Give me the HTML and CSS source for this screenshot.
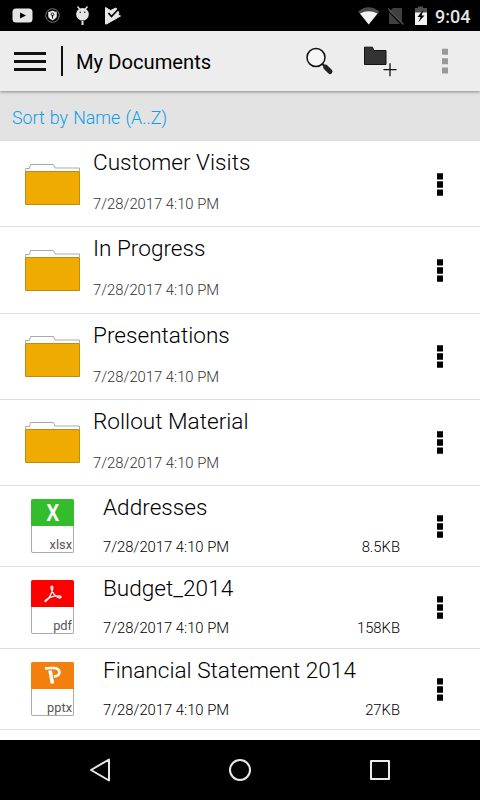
FILE: index.html
```
<!DOCTYPE html>
<html>
	<head>
		<meta charset="UTF-8">
		<title>My Documents</title>
		<link rel="stylesheet" href="styles.css">
	</head>
	<body>
		<!-- icons used more than once -->
		<svg class="defs">
			<symbol id="folder" viewBox="0 0 56 44">
				<path d="M.7 8V5.500H4.500L5.500 1.500H28.500L30 5H54.500V8" fill="#fff" stroke="#aaa"/>
				<path d="M.5 8.500H54.500V41.500H.5z" fill="#f0ab00" stroke="#bd8b16"/>
			</symbol>
			<symbol id="more" viewBox="0 0 6 24">
				<path d="M0 .2h6v6.400H0zM0 8.300h6v6.400H0zM0 16.400h6v6.400H0z" fill="#000"/>
			</symbol>
		</svg>

		<div class="status">
			<svg width="130" height="31" viewBox="0 0 130 31">
				<rect x="12.500" y="8.500" width="20" height="14" rx="3.500" fill="#e5e5e5"/>
				<path d="M20 12.500l6 3-6 3z" fill="#000"/>
				<circle cx="52.500" cy="15.500" r="6.800" fill="none" stroke="#777" stroke-width="1"/>
				<path d="M52.500 10.500c1.500 1 3 1.200 4.300 1.200v4.300c0 2-2.200 3.500-4.300 4.400-2.100-.9-4.300-2.400-4.300-4.400v-4.300c1.300 0 2.800-.2 4.300-1.200z" fill="#e5e5e5"/>
				<path d="M52.500 15v3.500" stroke="#000"/>
				<circle cx="52.500" cy="14.300" r="1.300" fill="none" stroke="#000" stroke-width=".8"/>
				<path d="M77.500 6.500l2.500 3M87.500 6.500l-2.500 3" stroke="#e5e5e5" stroke-width="1.400"/>
				<circle cx="82.500" cy="14.200" r="6.300" fill="#e5e5e5"/>
				<path d="M82.500 21v4" stroke="#e5e5e5" stroke-width="2"/>
				<circle cx="80.200" cy="12.300" r=".7"/><circle cx="84.800" cy="12.300" r=".7"/>
				<path d="M105.500 7.500l5 3 5.500-2.500 3 5-1 2 2.500 1-14 8h-1z" fill="#e5e5e5" stroke="#e5e5e5" stroke-linejoin="round"/>
				<path d="M108.500 13l3 3.500 7-7.500" fill="none" stroke="#000" stroke-width="1.700"/>
			</svg>
			<svg class="right" width="74" height="31" viewBox="0 0 74 31">
				<path d="M0 11.500Q10.500 3 21.500 11.500L10.700 24.500z" fill="#4a4a4a"/>
				<path d="M2 13.500Q10.500 9 19.500 13.500L10.700 24.500z" fill="#f2f2f2"/>
				<path d="M35 8h8q1 0 1 1v14.500L31 11.500zM31 12.500L42 24H32q-1 0-1-1z" fill="#404040"/>
				<path d="M30 8.500L45.500 24.500" stroke="#505050" stroke-width="1.300"/>
				<path d="M57 13V8h3V6.500h5V8h4v5z" fill="#505050"/>
				<path d="M57 12.500h12V25H57z" fill="#f2f2f2"/>
				<path d="M65.500 9.500l-6 7.500h3l-2 5 6-6.500h-3z" fill="#000"/>
			</svg>
			<span class="clock">9:04</span>
		</div>

		<div class="header">
			<div class="menu"><i></i><i></i><i></i></div>
			<div class="line"></div>
			<h1>My Documents</h1>
			<svg class="search" width="30" height="30" viewBox="0 0 30 30">
				<circle cx="10" cy="10.500" r="9" fill="#f5f5f5" stroke="#111" stroke-width="1.500"/>
				<path d="M16.200 16.800l3 3" stroke="#111" stroke-width="2"/>
				<path d="M19.700 20.200l4.300 4.300" stroke="#222" stroke-width="5" stroke-linecap="round"/>
			</svg>
			<svg class="add" width="34" height="32" viewBox="0 0 34 32">
				<path d="M.5 2.200h8l1.500 3.300h12v14H.5z" fill="#333" stroke="#111"/>
				<path d="M19.500 24.700h13M26 18.200v13" stroke="#111" stroke-width="1.300"/>
			</svg>
			<svg class="top-more" width="6" height="26" viewBox="0 0 6 26">
				<path d="M0 .8h6v6H0zM0 10.200h6v6H0zM0 19.600h6v6H0z" fill="#999"/>
			</svg>
		</div>

		<div class="sort">Sort by Name (A..Z)</div>

		<div class="list">
			<div class="row folder">
				<svg class="pic"><use href="#folder"/></svg>
				<div class="info"><h2>Customer Visits</h2><p>7/28/2017 4:10 PM</p></div>
				<svg class="more"><use href="#more"/></svg>
			</div>
			<div class="row folder">
				<svg class="pic"><use href="#folder"/></svg>
				<div class="info"><h2>In Progress</h2><p>7/28/2017 4:10 PM</p></div>
				<svg class="more"><use href="#more"/></svg>
			</div>
			<div class="row folder">
				<svg class="pic"><use href="#folder"/></svg>
				<div class="info"><h2>Presentations</h2><p>7/28/2017 4:10 PM</p></div>
				<svg class="more"><use href="#more"/></svg>
			</div>
			<div class="row folder">
				<svg class="pic"><use href="#folder"/></svg>
				<div class="info"><h2>Rollout Material</h2><p>7/28/2017 4:10 PM</p></div>
				<svg class="more"><use href="#more"/></svg>
			</div>
			<div class="row file">
				<div class="doc">
					<div class="type xlsx"><b>X</b></div>
					<span>xlsx</span>
				</div>
				<div class="info"><h2>Addresses</h2><p>7/28/2017 4:10 PM<span>8.5KB</span></p></div>
				<svg class="more"><use href="#more"/></svg>
			</div>
			<div class="row file">
				<div class="doc">
					<div class="type pdf">
						<svg width="18" height="18" viewBox="0 0 18 18">
							<path d="M1.500 16.500C4 15 8.500 8 8.800 3c0-2.500-2-2.500-1.800 0C7.500 7 12 12.500 15.500 13c2 .2 2-2 0-2C11 10.800 5 12.500 1.800 15c-1 1-.8 1.800-.3 1.500z" fill="none" stroke="#fff" stroke-width="1.300"/>
						</svg>
					</div>
					<span>pdf</span>
				</div>
				<div class="info"><h2>Budget_2014</h2><p>7/28/2017 4:10 PM<span>158KB</span></p></div>
				<svg class="more"><use href="#more"/></svg>
			</div>
			<div class="row file">
				<div class="doc">
					<div class="type pptx">
						<svg width="18" height="18" viewBox="0 0 18 18">
							<path d="M1 2.500Q5 1.800 9 2c8.500-.5 8.500 8.500 1 8.500" fill="none" stroke="#fff" stroke-width="2.600"/>
							<path d="M6 4.500L8.500 17.500" stroke="#fff" stroke-width="3.600"/>
						</svg>
					</div>
					<span>pptx</span>
				</div>
				<div class="info"><h2>Financial Statement 2014</h2><p>7/28/2017 4:10 PM<span>27KB</span></p></div>
				<svg class="more"><use href="#more"/></svg>
			</div>
		</div>

		<div class="nav">
			<svg width="24" height="26" viewBox="0 0 24 26"><path d="M21 2.500v21L3 13z"/></svg>
			<svg width="24" height="26" viewBox="0 0 24 26"><circle cx="12" cy="13" r="10"/></svg>
			<svg width="24" height="26" viewBox="0 0 24 26"><path d="M3 4h18v18H3z"/></svg>
		</div>
	</body>
</html>
```
FILE: styles.css
```
*{
    margin: 0;
    padding: 0;
    box-sizing: border-box;
}
body{
    width: 480px;
    height: 800px;
    display: flex;
    flex-direction: column;
    overflow: hidden;
    background: #fff;
    color: #000;
    font-family: Roboto, "Liberation Sans", sans-serif;
}
svg{
    display: block;
    flex: none;
}
.defs{
    position: absolute;
    width: 0;
    height: 0;
}
/* status bar */
.status{
    flex: none;
    height: 31px;
    display: flex;
    background: #000;
}
.status .right{
    margin-left: 228px;
}
.clock{
    margin-left: 3px;
    line-height: 33px;
    font-size: 18px;
    font-weight: 500;
    color: #e5e5e5;
}
/* title bar */
.header{
    position: relative;
    flex: none;
    height: 60px;
    display: flex;
    align-items: flex-start;
    background: #ededed;
    box-shadow: 0 1px 3px rgba(0,0,0,.4);
}
.menu{
    width: 32px;
    margin: 21px 0 0 14px;
}
.menu i{
    display: block;
    height: 3px;
    margin-bottom: 5px;
    background: #111;
}
.line{
    width: 2px;
    height: 30px;
    margin: 15px 0 0 15px;
    background: #111;
}
h1{
    width: 229px;
    margin-left: 13px;
    line-height: 62px;
    font-size: 20.2px;
    font-weight: 400;
    white-space: nowrap;
}
.search{
    margin: 16px 0 0 1px;
}
.add{
    margin: 14px 0 0 28px;
}
.top-more{
    margin: 17px 0 0 44px;
}
.sort{
    flex: none;
    height: 50px;
    padding-left: 12px;
    line-height: 53px;
    font-size: 17.8px;
    font-weight: 300;
    word-spacing: .8px;
    color: #109ee8;
    background: #e3e3e3;
    border-bottom: 1px solid #ddd;
}
/* list */
.list{
    flex: 1;
}
.row{
    display: flex;
    border-bottom: 1px solid #ddd;
}
.folder{
    height: 86.25px;
    padding-left: 25px;
}
.file{
    height: 81.25px;
    padding-left: 31px;
}
.pic{
    width: 56px;
    height: 44px;
    margin: 21.500px 12px 0 0;
}
.info{
    width: 320px;
}
.file .info{
    width: 297px;
    margin-left: 29px;
}
h2{
    height: 42px;
    line-height: 43px;
    font-size: 22.6px;
    font-weight: 300;
    white-space: nowrap;
}
.file h2{
    height: 41px;
}
.info p{
    display: flex;
    justify-content: space-between;
    line-height: 43px;
    font-size: 14.8px;
    font-weight: 300;
    color: #333;
}
.file p{
    line-height: 40px;
    color: #000;
}
.more{
    width: 6px;
    height: 24px;
    margin: 31.500px 0 0 24px;
}
.file .more{
    margin: 29px 0 0 37px;
}
.doc{
    width: 43px;
    height: 54px;
    margin-top: 13px;
    border: 1px solid #aaa;
    border-top: 0;
    border-radius: 2px;
    text-align: right;
}
.doc>span{
    display: block;
    padding-right: 1px;
    line-height: 37px;
    font-size: 12.8px;
    color: #555;
}
.type{
    height: 27px;
    margin: 0 -1px;
    display: flex;
    justify-content: center;
    align-items: center;
    border-radius: 2px 2px 0 0;
    color: #fff;
}
.type b{
    font: bold 23px/27px "Open Sans", sans-serif;
    transform: scaleX(.82);
}
.xlsx{
    background: #35bc2c;
}
.pdf{
    background: #fe0000;
}
.pptx{
    background: #f37f0d;
}
/* navigation bar */
.nav{
    flex: none;
    height: 60px;
    display: flex;
    justify-content: center;
    align-items: center;
    gap: 116px;
    background: #000;
}
.nav svg{
    fill: none;
    stroke: #e8e8e8;
    stroke-width: 2;
    stroke-linejoin: round;
}
```
